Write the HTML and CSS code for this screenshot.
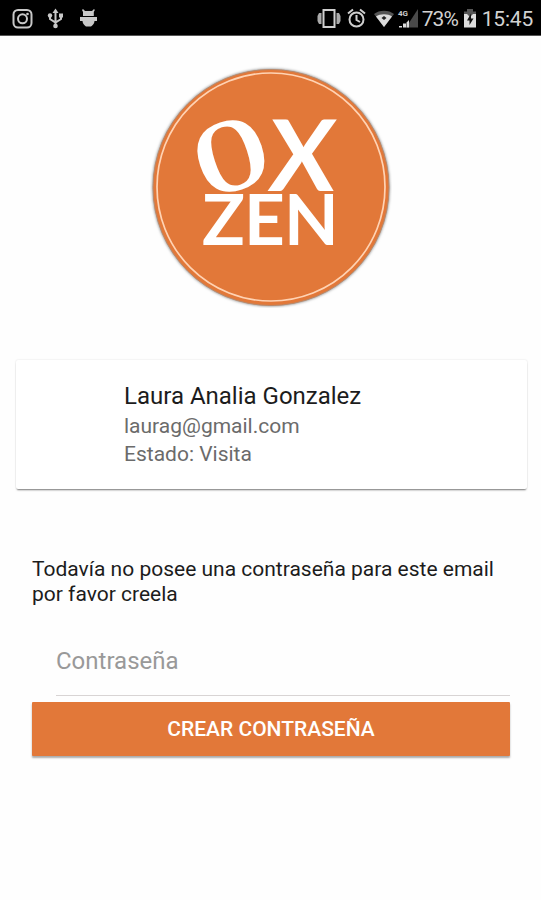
FILE: index.html
```html
<!DOCTYPE html>
<html lang="es">
<head>
<meta charset="utf-8">
<title>Oxzen</title>
<link rel="stylesheet" href="styles.css">
</head>
<body>
<header class="status">
  <svg class="status-icons" width="100" height="36" viewBox="0 0 100 36" aria-hidden="true">
    <g fill="none" stroke="#c8c8c8" stroke-width="2">
      <rect x="13.5" y="10" width="18" height="17.5" rx="4.5"/>
      <circle cx="22.5" cy="18.8" r="4.5"/>
      <path d="M55.5 12v13M50 15v4l5.5 3.5 5.5-3.500v-4"/>
    </g>
    <g fill="#c8c8c8">
      <circle cx="27.500" cy="14" r="1.300"/>
      <path d="M55.500 8.500l3 4.500h-6z"/>
      <circle cx="55.500" cy="26" r="2.300"/>
      <circle cx="50" cy="15.500" r="2.200"/>
      <path d="M59 13.500h4v4h-4z"/>
      <path d="M83 9l2 2h7l2-2 .8 1-1 2v4H83v-4l-1-2zM80 17h17v4h-2.500c0 3-2.500 4.500-3.500 5.500h-5c-1-1-3.500-2.500-3.500-5.500H80z"/>
    </g>
  </svg>
  <div class="status-right">
    <svg width="103" height="36" viewBox="316 0 103 36" aria-hidden="true">
      <g fill="none" stroke="#cfcfcf" stroke-width="2">
        <rect x="322.500" y="10" width="11" height="17"/>
        <circle cx="355.500" cy="19.500" r="7"/>
        <path d="M355.500 15v5l3.500 2M347 13.500l5-4M364 13.500l-5-4"/>
      </g>
      <path fill="#aaa" d="M318 13h2.500v11H318l-1.500-3v-5zM335.500 13h2.500l1.500 3v5l-1.500 3h-2.500z"/>
      <path fill="#555" d="M373 14c5-4.500 15-4.500 20 0l-10 13z"/>
      <path fill="#ddd" d="M375 16.500c4-3 12-3 16 0l-8 10.500z"/>
      <path fill="#222" d="M380.500 18l2.500-2 2.500 2-2.500 2z"/>
      <path fill="#4a4a4a" d="M417 9v18.500h-12z"/>
      <path fill="#ddd" d="M402 23.500h3v4h-3zM398 26h3v1.500h-3zM408 20v7.500h-2.500v-5z"/>
      <text class="net" x="397" y="15.500">4G</text>
    </svg>
    <span class="pct">73%</span>
    <svg class="battery" width="14" height="36" viewBox="0 0 14 36" aria-hidden="true">
      <path fill="#555" d="M4 9h6v2.500h3V17H1v-5.500h3z"/>
      <path fill="#ddd" d="M1 14h3l3 3 3-3h3v13.500H1z"/>
      <path fill="#111" d="M8 13.500v5h2.500L6.500 25v-4.500H4z"/>
    </svg>
    <span class="clock">15:45</span>
  </div>
</header>
<main class="page">
  <svg class="logo" width="242" height="242" viewBox="150 66 242 242" role="img" aria-label="Ox Zen">
    <circle class="logo-disc" cx="271" cy="187.500" r="118"/>
    <circle class="logo-ring" cx="271" cy="187" r="114"/>
    <text class="mark mark-o" transform="translate(206.500 200) rotate(-18) scale(.92 1.020)">O</text>
    <text class="mark mark-x" transform="translate(267.500 191) skewX(-3)">X</text>
    <text class="mark mark-bottom" transform="translate(0 245)" x="202 244 284">ZEN</text>
  </svg>
  <section class="card">
    <h1 class="name">Laura Analia Gonzalez</h1>
    <p class="detail email">laurag@gmail.com</p>
    <p class="detail state">Estado: Visita</p>
  </section>
  <form class="form">
    <p class="notice">Todavía no posee una contraseña para este email<br>por favor creela</p>
    <input class="password" type="password" placeholder="Contraseña" aria-label="Contraseña">
    <button class="submit" type="button">CREAR CONTRASEÑA</button>
  </form>
</main>
</body>
</html>
```
FILE: styles.css
```css
* { box-sizing: border-box; }
body {
  margin: 0;
  min-height: 900px;
  background: #fefefe;
  color: #1c1c1c;
  font-family: Roboto, sans-serif;
}
h1, p { margin: 0; font-weight: 400; white-space: nowrap; }
svg { display: block; flex: none; }

.status {
  display: flex;
  justify-content: space-between;
  height: 36px;
  background: #000;
  border-bottom: 1px solid #555;
  color: #d2d2d2;
}
.status-right { display: flex; padding-right: 8px; font-size: 21px; line-height: 39px; letter-spacing: -.2px; }
.net { font: 700 8px Roboto, sans-serif; fill: #ccc; }
.pct { width: 40px; margin-left: 2px; white-space: nowrap; letter-spacing: -.9px; }
.battery { margin: 0 5px 0 1px; }

.page { display: flex; flex-direction: column; }
.logo { margin: 30px 0 0 150px; }
.logo-disc { fill: #e27839; stroke: #b98a6c; stroke-width: 1; filter: drop-shadow(0 0 1.5px #777); }
.logo-ring { fill: none; stroke: #ffd3b4; stroke-width: 1.700; }
.mark { font-family: Lato, sans-serif; font-weight: 700; fill: #fff; }
.mark-o { font-family: "Liberation Serif", serif; font-size: 103px; }
.mark-x { font-size: 99px; }
.mark-bottom { font-size: 71px; }

.card {
  height: 129px;
  margin: 52px 14px 0 16px;
  padding: 22px 0 0 108px;
  background: #fff;
  border-radius: 2px;
  box-shadow: 0 2px 2px -1px #777, 0 0 2px #ddd;
}
.name { font-size: 24px; line-height: 28px; }
.detail { font-size: 21px; line-height: 28px; color: #6b6b6b; }
.email { margin-top: 2px; }

.form { display: flex; flex-direction: column; margin: 68px 31px 0 32px; }
.notice { font-size: 21px; line-height: 25px; }
.password {
  height: 70px;
  margin: 19px 0 6px 24px;
  padding: 0;
  border: 0;
  border-bottom: 1px solid #d8d4d4;
  background: transparent;
  font: 24px Roboto, sans-serif;
}
.password::placeholder { color: #999; }
.submit {
  height: 54px;
  padding: 0;
  border: 0;
  border-radius: 1px;
  background: #e27839;
  box-shadow: 0 2px 2px #aaa;
  color: #fff;
  font: 500 21px Roboto, sans-serif;
}
```
